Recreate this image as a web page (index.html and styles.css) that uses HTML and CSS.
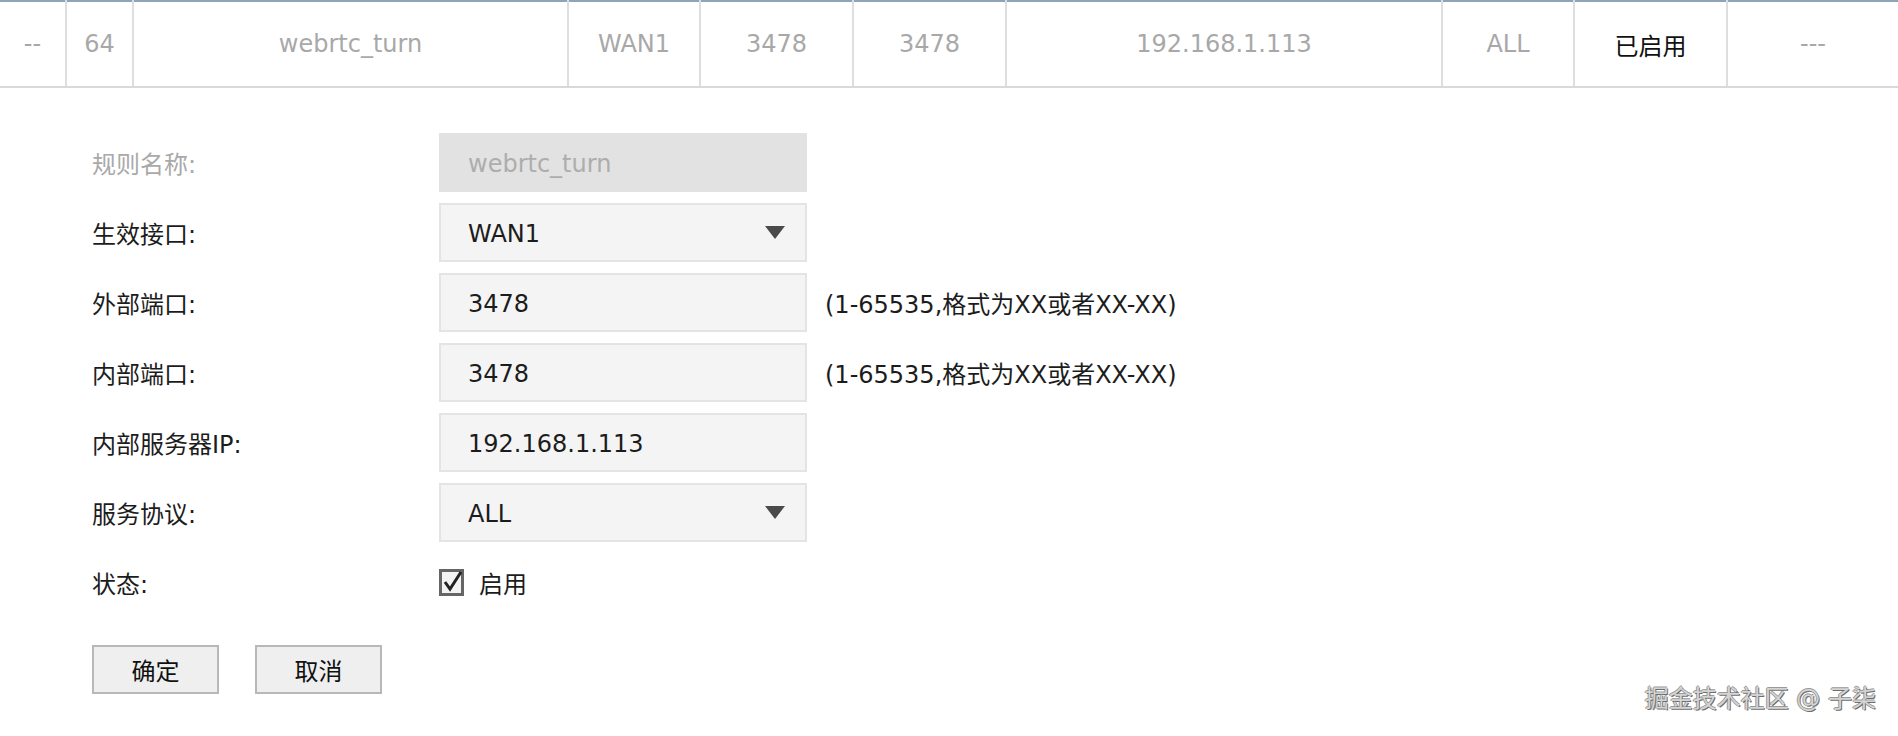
FILE: index.html
```html
<!DOCTYPE html>
<html lang="zh-CN">
<head>
    <meta charset="UTF-8">
    <title>虚拟服务器 - 编辑规则</title>
    <link rel="stylesheet" href="styles.css">
</head>
<body>
<!-- 规则列表中正在编辑的那一行 -->
<table id="rule_table">
    <colgroup>
        <col style="width:66px"><col style="width:67px"><col style="width:435px">
        <col style="width:132px"><col style="width:153px"><col style="width:153px">
        <col style="width:436px"><col style="width:132px"><col style="width:153px">
        <col style="width:171px">
    </colgroup>
    <tr class="rule-row">
        <td>--</td>
        <td>64</td>
        <td>webrtc_turn</td>
        <td>WAN1</td>
        <td>3478</td>
        <td>3478</td>
        <td>192.168.1.113</td>
        <td>ALL</td>
        <td class="state-on">已启用</td>
        <td>---</td>
    </tr>
</table>

<!-- 编辑表单 -->
<div id="rule_form">
    <div class="form-row">
        <label class="form-label disabled">规则名称:</label>
        <div class="form-input disabled">webrtc_turn</div>
    </div>
    <div class="form-row">
        <label class="form-label">生效接口:</label>
        <div class="form-input form-select">
            <span>WAN1</span>
            <svg class="select-arrow" width="20" height="13" viewBox="0 0 20 13"><path d="M0 0 L20 0 L10 13 Z" fill="#4a4a4a"/></svg>
        </div>
    </div>
    <div class="form-row">
        <label class="form-label">外部端口:</label>
        <div class="form-input">3478</div>
        <span class="form-hint">(1-65535,格式为XX或者XX-XX)</span>
    </div>
    <div class="form-row">
        <label class="form-label">内部端口:</label>
        <div class="form-input">3478</div>
        <span class="form-hint">(1-65535,格式为XX或者XX-XX)</span>
    </div>
    <div class="form-row">
        <label class="form-label">内部服务器IP:</label>
        <div class="form-input">192.168.1.113</div>
    </div>
    <div class="form-row">
        <label class="form-label">服务协议:</label>
        <div class="form-input form-select">
            <span>ALL</span>
            <svg class="select-arrow" width="20" height="13" viewBox="0 0 20 13"><path d="M0 0 L20 0 L10 13 Z" fill="#4a4a4a"/></svg>
        </div>
    </div>
    <div class="form-row">
        <label class="form-label">状态:</label>
        <div class="form-check">
            <svg width="25" height="27" viewBox="0 0 25 27">
                <rect x="1.5" y="1.5" width="22" height="24" fill="#f3f3f3" stroke="#666" stroke-width="3"/>
                <path d="M6 13 L11 20 L22 3" fill="none" stroke="#222" stroke-width="3"/>
            </svg>
            <span>启用</span>
        </div>
    </div>
    <div class="form-btns">
        <button class="btn">确定</button>
        <button class="btn">取消</button>
    </div>
</div>

<div class="watermark">掘金技术社区 @ 子柒</div>
</body>
</html>
```

FILE: styles.css
```css
*{
    margin: 0;
    padding: 0;
    box-sizing: border-box;
}
body{
    position: relative;
    min-height: 736px;
    background: #fff;
    font-family: "DejaVu Sans", "Noto Sans CJK SC", sans-serif;
    font-size: 24px;
    color: #1c1c1c;
}
#rule_table{
    width: 100%;
    table-layout: fixed;
    border-collapse: collapse;
    border-top: 2px solid #8fa3b9;
}
.rule-row>td{
    height: 86px;
    text-align: center;
    color: #a8a8a8;
    border-left: 2px solid #dedede;
    border-bottom: 2px solid #d9d9d9;
    white-space: nowrap;
}
.rule-row>td:first-child{
    border-left: none;
}
.rule-row>td.state-on{
    color: #111;
}
#rule_form{
    padding: 45px 0 0 92px;
}
.form-row{
    display: flex;
    align-items: center;
    height: 59px;
    margin-bottom: 11px;
}
.form-label{
    width: 347px;
    flex-shrink: 0;
}
.form-label.disabled{
    color: #a9a9a9;
}
.form-input{
    width: 368px;
    height: 59px;
    display: flex;
    align-items: center;
    justify-content: space-between;
    padding: 3px 20px 0 27px;
    background: #f4f4f4;
    border: 2px solid #e4e4e4;
    color: #1c1c1c;
}
.form-input.disabled{
    background: #e2e2e2;
    border-color: #e2e2e2;
    color: #adadad;
}
.select-arrow{
    display: block;
    margin-top: -3px;
}
.form-hint{
    margin-left: 18px;
    white-space: nowrap;
}
.form-check{
    display: flex;
    align-items: center;
}
.form-check>svg{
    margin-right: 15px;
}
.form-btns{
    display: flex;
    gap: 36px;
    margin-top: 33px;
}
.btn{
    width: 127px;
    height: 49px;
    background: #efefef;
    border: 2px solid #b8b8b8;
    font-family: "DejaVu Sans", "Noto Sans CJK SC", sans-serif;
    font-size: 24px;
    color: #111;
}
.watermark{
    position: absolute;
    right: 22px;
    bottom: 22px;
    font-size: 24px;
    color: #d4d4d4;
    text-shadow: 1px 1px 0 #6e6e6e, -1px 0 0 #9a9a9a, 0 -1px 0 #9a9a9a;
    white-space: nowrap;
}
```
